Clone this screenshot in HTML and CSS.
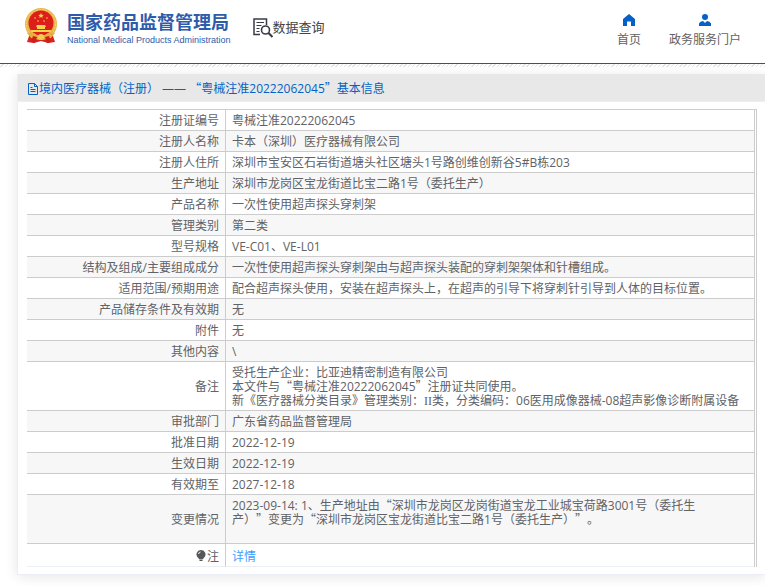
FILE: index.html
```
<!DOCTYPE html>
<html lang="zh-CN">
<head>
<meta charset="UTF-8">
<meta name="viewport" content="width=device-width, initial-scale=1.0">
<title>数据查询</title>
<link rel="stylesheet" href="styles.css">
</head>
<body>

<header class="header">
  <div class="logo">
    <svg class="emblem" viewBox="0 0 34 36" width="34" height="36">
      <path d="M6 25 L28 25 L31 34 L24 35 L17 33 L10 35 L3 34 Z" fill="#d8241c"/>
      <circle cx="17" cy="16" r="16" fill="#e9b548"/>
      <circle cx="17" cy="16" r="14.5" fill="none" stroke="#f6d678" stroke-width="1" stroke-dasharray="2 1"/>
      <circle cx="17" cy="15" r="12.5" fill="#dc1f1a"/>
      <path d="M17 5 l.8 1.700 1.900 .2 -1.400 1.300 .4 1.900 -1.700 -1 -1.700 1 .4 -1.900 -1.400 -1.300 1.900 -.2z" fill="#f7d24a"/>
      <g fill="#f7d24a">
        <circle cx="11" cy="10" r=".8"/><circle cx="23" cy="10" r=".8"/>
        <circle cx="14" cy="13" r=".8"/><circle cx="20" cy="13" r=".8"/>
        <path d="M13 17h8l1 2H12zM13 19h8v2h-8zM7 22h20v2H7z"/>
      </g>
      <path d="M3 25 Q10 23 13 28 L21 28 Q24 23 31 25 L27 30 L22 31 L12 31 L7 30 Z" fill="#e6b03c"/>
      <circle cx="17" cy="29" r="3" fill="#f2cc58"/>
      <path d="M9 28 L13 29 L11 35 L7 34Z M25 28 L21 29 L23 35 L27 34Z" fill="#cf1f1a"/>
    </svg>
    <div class="logo-text">
      <div class="logo-cn">国家药品监督管理局</div>
      <div class="logo-en">National Medical Products Administration</div>
    </div>
  </div>
  <div class="query">
    <svg viewBox="0 0 20 20" width="20" height="20" fill="none" stroke="#3b3b48">
      <path d="M7 16.500H1V1h12.500v6" stroke-width="1.500"/>
      <path d="M3.500 4.500h7.500M3.500 7.500h5M3.500 10.500h3M3.500 13.500h3" stroke-width="1"/>
      <circle cx="12.500" cy="12" r="4" stroke-width="1.600"/>
      <path d="M15.500 15l4 4" stroke-width="2.200"/>
    </svg>
    <span>数据查询</span>
  </div>
  <nav class="nav">
    <a href="#">
      <svg viewBox="0 0 12 12" width="12" height="12"><path d="M6 0L0 5v7h4V7.500h4V12h4V5z" fill="#0561c5"/></svg>
      首页
    </a>
    <a href="#">
      <svg viewBox="0 0 12 12" width="12" height="12"><circle cx="6" cy="3" r="3" fill="#0561c5"/><path d="M0 12V9.500Q1 7 4 7L6 9L8 7Q11 7 12 9.500V12z" fill="#0561c5"/></svg>
      政务服务门户
    </a>
  </nav>
</header>
<div class="stripes"></div>

<main class="card">
  <h1 class="card-title">
    <svg viewBox="0 0 12 12" width="12" height="12" fill="none" stroke="#0561c5"><path d="M1.500 .5h6l3 3v8h-9zM7.500 .5v3h3M3.500 4.500h2M3.500 6.500h5M3.500 8.500h5"/></svg>
    <span>境内医疗器械（注册） —— <span class="quote">“</span>粤械注准20222062045<span class="quote">”</span>基本信息</span>
  </h1>
  <div class="table-wrap">
    <table class="info">
      <tbody>
        <tr><th scope="row">注册证编号</th><td>粤械注准20222062045</td></tr>
        <tr><th scope="row">注册人名称</th><td>卡本（深圳）医疗器械有限公司</td></tr>
        <tr><th scope="row">注册人住所</th><td>深圳市宝安区石岩街道塘头社区塘头1号路创维创新谷5#B栋203</td></tr>
        <tr><th scope="row">生产地址</th><td>深圳市龙岗区宝龙街道比宝二路1号（委托生产）</td></tr>
        <tr><th scope="row">产品名称</th><td>一次性使用超声探头穿刺架</td></tr>
        <tr><th scope="row">管理类别</th><td>第二类</td></tr>
        <tr><th scope="row">型号规格</th><td>VE-C01、VE-L01</td></tr>
        <tr><th scope="row">结构及组成/主要组成成分</th><td>一次性使用超声探头穿刺架由与超声探头装配的穿刺架架体和针槽组成。</td></tr>
        <tr><th scope="row">适用范围/预期用途</th><td>配合超声探头使用，安装在超声探头上，在超声的引导下将穿刺针引导到人体的目标位置。</td></tr>
        <tr><th scope="row">产品储存条件及有效期</th><td>无</td></tr>
        <tr><th scope="row">附件</th><td>无</td></tr>
        <tr><th scope="row">其他内容</th><td>\</td></tr>
        <tr><th scope="row">备注</th><td>受托生产企业：比亚迪精密制造有限公司<br>本文件与<span class="quote">“</span>粤械注准20222062045<span class="quote">”</span>注册证共同使用。<br>新《医疗器械分类目录》管理类别：<span class="roman">II</span>类，分类编码：06医用成像器械-08超声影像诊断附属设备</td></tr>
        <tr><th scope="row">审批部门</th><td>广东省药品监督管理局</td></tr>
        <tr><th scope="row">批准日期</th><td>2022-12-19</td></tr>
        <tr><th scope="row">生效日期</th><td>2022-12-19</td></tr>
        <tr><th scope="row">有效期至</th><td>2027-12-18</td></tr>
        <tr><th scope="row">变更情况</th><td>2023-09-14: 1、生产地址由<span class="quote">“</span>深圳市龙岗区龙岗街道宝龙工业城宝荷路3001号（委托生<br>产）<span class="quote">”</span>变更为<span class="quote">“</span>深圳市龙岗区宝龙街道比宝二路1号（委托生产）<span class="quote">”</span>。<br><br></td></tr>
        <tr class="note">
          <th scope="row"><svg viewBox="0 0 10 12" width="10" height="12"><path d="M5 0a4.400 4.400 0 0 0-3 7.700L3.500 9.500h3L8 7.700A4.400 4.400 0 0 0 5 0z" fill="#55575b"/><path d="M3.500 10.500h3" stroke="#55575b"/><path d="M2.500 4Q3 2 4.500 2" fill="none" stroke="#fff"/></svg>注</th>
          <td><a href="#">详情</a></td>
        </tr>
      </tbody>
    </table>
  </div>
</main>

</body>
</html>
```
FILE: styles.css
```
* {
  box-sizing: border-box;
}

body {
  margin: 0;
  background: #fff;
  color: #606266;
  font-family: "Open Sans", "Noto Sans CJK SC", sans-serif;
  font-size: 12px;
  line-height: 14px;
  text-spacing-trim: space-all;
}

a {
  color: inherit;
  text-decoration: none;
}

/* header */
.header {
  display: flex;
  align-items: flex-start;
  height: 64px;
  padding: 8px 24px 0;
  border-bottom: 1px solid #0561b5;
}

.logo {
  display: flex;
  gap: 9px;
}

.logo-text {
  padding-top: 4px;
  color: #2f5bab;
  white-space: nowrap;
}

.logo-cn {
  font-size: 18px;
  font-weight: bold;
  line-height: 20px;
}

.logo-en {
  font-family: "Liberation Sans", Arial, sans-serif;
  font-size: 9px;
  line-height: 16px;
}

.query {
  display: flex;
  margin: 10px 0 0 22px;
  color: #444;
  font-size: 13px;
  line-height: 18px;
  white-space: nowrap;
}

.nav {
  display: flex;
  gap: 28px;
  margin-left: auto;
  padding-top: 6px;
}

.nav a {
  display: flex;
  flex-direction: column;
  align-items: center;
  gap: 7px;
}

.stripes {
  height: 3px;
  background: repeating-linear-gradient(135deg, #fff 0 2px, #e4e4e4 2px 3px);
}

/* detail card */
.card {
  margin: 7px 0 12px 17px;
  border: 1px solid #ebeef5;
  border-width: 0 0 1px 1px;
  box-shadow: 0 2px 12px rgba(0, 0, 0, 0.1);
}

.card-title {
  display: flex;
  align-items: center;
  height: 28px;
  margin: 0;
  padding: 2px 9px 0;
  border-bottom: 1px solid #ebeef5;
  background: #e8e8e8;
  color: #0561c5;
  font-size: 12px;
  font-weight: normal;
}

.table-wrap {
  margin: 7px 8px 7px 9px;
  padding-right: 1px;
  border-top: 1px solid #ccc;
  border-right: 1px solid #ccc;
}

.info {
  width: 100%;
  border-right: 1px solid #ccc;
  border-spacing: 0;
  table-layout: fixed;
}

.info th,
.info td {
  padding: 4px 6px 2px;
  border-bottom: 1px solid #ccc;
  text-align: left;
}

.info th {
  width: 199px;
  border-right: 1px solid #ccc;
  font-weight: normal;
  text-align: right;
}

.info tr:nth-child(even) {
  background: #f7f7f7;
}

.info .note th,
.info .note td {
  padding: 6px 6px 2px;
  border-bottom-color: #ebeef5;
}

.note svg {
  margin-right: 1px;
  vertical-align: -1px;
}

.note a {
  color: #409eff;
}

/* full-width quotation marks */
.quote {
  font-family: "Noto Sans CJK SC", sans-serif;
  line-height: 0;
}

.roman {
  font-family: "Liberation Serif", serif;
  line-height: 0;
}
```
